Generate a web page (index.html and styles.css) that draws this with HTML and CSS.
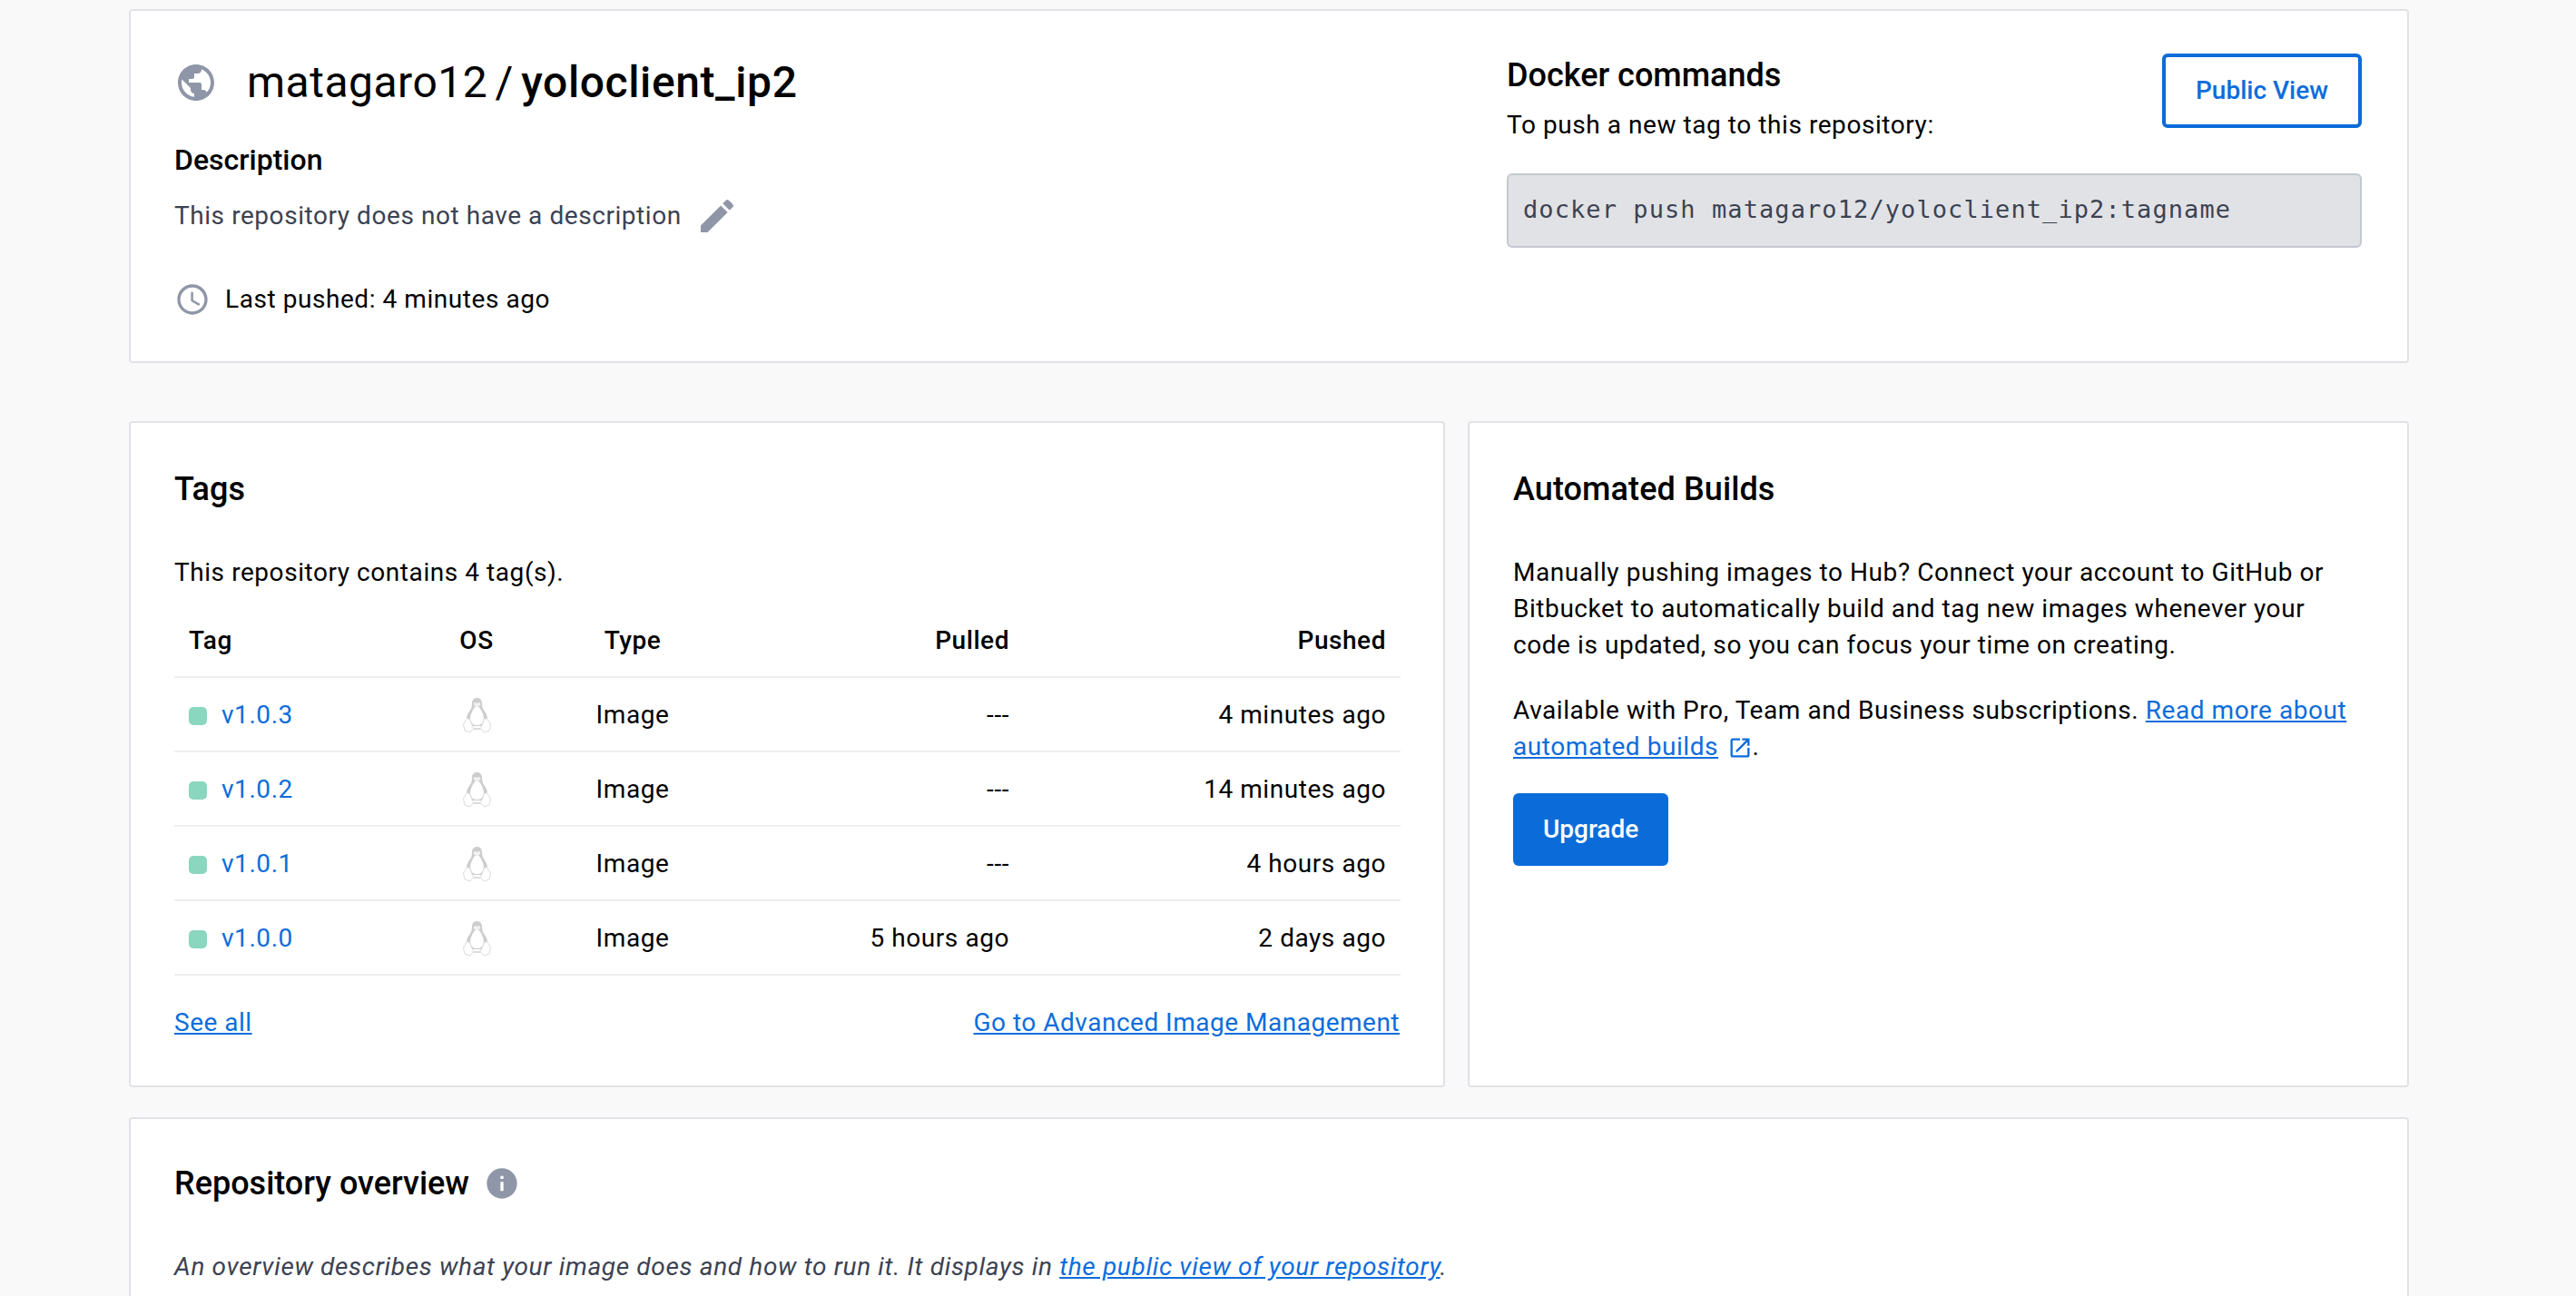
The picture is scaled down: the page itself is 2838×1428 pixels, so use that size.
FILE: index.html
```html
<!DOCTYPE html>
<html>
  <head>
    <title>matagaro12 / yoloclient_ip2</title>

    <link rel="stylesheet" href="styles.css">
  </head>
  <body>
    <svg class="icon_defs">
      <symbol id="linux_icon" viewBox="0 0 33 40">
        <path d="M16.5 1c-3.5 0-5.5 2.5-5.5 6 0 4-1 6-3 9-2 3-3.5 6-3 10l3 6h17l3-6c.5-4-1-7-3-10-2-3-3-5-3-9 0-3.5-2-6-5.5-6z" fill="#cdcdcd"/>
        <path d="M16.5 10c-2.5.5-4 3-5.500 6.500-1.500 3-2.500 6-1.500 9.500 1 3 3 5 7 5s6-2 7-5c1-3.500 0-6.500-1.500-9.500-1.500-3.500-3-6-5.500-6.500z" fill="#fff"/>
        <path d="M13 6.500c1-1 2.500-.5 3.500.5 1-1 2.500-1.500 3.500-.5.500 1.500 0 3-1 3.500l-2.500 1-2.500-1c-1-.5-1.500-2-1-3.500z" fill="#f1f1f1"/>
        <path d="M1.500 30l4-6.500 3 1 4 10-3.500 4.500-6-2z" fill="#fff" stroke="#dcdcdc"/>
        <path d="M31.500 30l-4-6.500-3 1-4 10 3.500 4.500 6-2z" fill="#fff" stroke="#dcdcdc"/>
        <path d="M12.500 35h8" stroke="#dcdcdc" stroke-width="2"/>
      </symbol>
    </svg>

    <div class="page">
      <div class="card repo_card">
        <div class="repo_info">
          <div class="repo_title">
            <svg class="globe_icon" viewBox="0 0 24 24"><path d="M12 2C6.48 2 2 6.48 2 12s4.48 10 10 10 10-4.48 10-10S17.52 2 12 2zm-1 17.93c-3.95-.49-7-3.85-7-7.93 0-.62.08-1.21.21-1.79L9 15v1c0 1.1.9 2 2 2v1.93zm6.9-2.54c-.26-.81-1-1.39-1.9-1.39h-1v-3c0-.55-.45-1-1-1H8v-2h2c.55 0 1-.45 1-1V7h2c1.1 0 2-.9 2-2v-.41c2.93 1.19 5 4.06 5 7.41 0 2.08-.8 3.97-2.1 5.39z"/></svg>
            <h1>matagaro12 <span class="slash">/</span> <strong>yoloclient_ip2</strong></h1>
          </div>
          <h2 class="description_title">Description</h2>
          <div class="description_row">
            <span>This repository does not have a description</span>
            <svg class="edit_icon" viewBox="0 0 24 24"><path d="M3 17.25V21h3.75L17.81 9.94l-3.75-3.75L3 17.25zM20.71 7.04c.39-.39.39-1.02 0-1.41l-2.34-2.34c-.39-.39-1.02-.39-1.41 0l-1.83 1.83 3.75 3.75 1.83-1.83z"/></svg>
          </div>
          <div class="pushed_row">
            <svg class="clock_icon" viewBox="0 0 24 24"><path d="M11.99 2C6.47 2 2 6.48 2 12s4.47 10 9.99 10C17.52 22 22 17.52 22 12S17.52 2 11.99 2zM12 20c-4.42 0-8-3.58-8-8s3.58-8 8-8 8 3.58 8 8-3.58 8-8 8zm.5-13H11v6l5.25 3.15.75-1.23-4.5-2.67z"/></svg>
            <span>Last pushed: 4 minutes ago</span>
          </div>
        </div>

        <div class="docker_commands">
          <div class="docker_top">
            <div>
              <h2 class="section_title">Docker commands</h2>
              <p class="docker_hint">To push a new tag to this repository:</p>
            </div>
            <a class="public_button">Public View</a>
          </div>
          <div class="docker_code">docker push matagaro12/yoloclient_ip2:tagname</div>
        </div>
      </div>

      <div class="middle_row">
        <div class="card tags_card">
          <h2 class="section_title">Tags</h2>
          <p class="tags_intro">This repository contains 4 tag(s).</p>
          <table class="tags_table">
            <colgroup>
              <col class="col_tag">
              <col class="col_os">
              <col class="col_type">
              <col class="col_pulled">
              <col class="col_pushed">
            </colgroup>
            <thead>
              <tr>
                <th>Tag</th>
                <th class="center">OS</th>
                <th class="center">Type</th>
                <th class="right">Pulled</th>
                <th class="right">Pushed</th>
              </tr>
            </thead>
            <tbody>
              <tr>
                <td><span class="tag_dot"></span><a class="tag_link">v1.0.3</a></td>
                <td class="center"><svg class="linux_icon"><use href="#linux_icon"/></svg></td>
                <td class="center">Image</td>
                <td class="right">---</td>
                <td class="right">4 minutes ago</td>
              </tr>
              <tr>
                <td><span class="tag_dot"></span><a class="tag_link">v1.0.2</a></td>
                <td class="center"><svg class="linux_icon"><use href="#linux_icon"/></svg></td>
                <td class="center">Image</td>
                <td class="right">---</td>
                <td class="right">14 minutes ago</td>
              </tr>
              <tr>
                <td><span class="tag_dot"></span><a class="tag_link">v1.0.1</a></td>
                <td class="center"><svg class="linux_icon"><use href="#linux_icon"/></svg></td>
                <td class="center">Image</td>
                <td class="right">---</td>
                <td class="right">4 hours ago</td>
              </tr>
              <tr>
                <td><span class="tag_dot"></span><a class="tag_link">v1.0.0</a></td>
                <td class="center"><svg class="linux_icon"><use href="#linux_icon"/></svg></td>
                <td class="center">Image</td>
                <td class="right">5 hours ago</td>
                <td class="right">2 days ago</td>
              </tr>
            </tbody>
          </table>
          <div class="tags_footer">
            <a class="text_link">See all</a>
            <a class="text_link">Go to Advanced Image Management</a>
          </div>
        </div>

        <div class="card builds_card">
          <h2 class="section_title">Automated Builds</h2>
          <p class="builds_text">Manually pushing images to Hub? Connect your account to GitHub or Bitbucket to automatically build and tag new images whenever your code is updated, so you can focus your time on creating.</p>
          <p class="builds_plans">Available with Pro, Team and Business subscriptions. <a class="text_link">Read more about</a> <a class="text_link">automated builds</a> <svg class="external_icon" viewBox="0 0 24 24"><path d="M19 19H5V5h7V3H5c-1.11 0-2 .9-2 2v14c0 1.1.89 2 2 2h14c1.1 0 2-.9 2-2v-7h-2v7zM14 3v2h3.59l-9.83 9.83 1.41 1.41L19 6.41V10h2V3h-7z"/></svg>.</p>
          <a class="upgrade_button">Upgrade</a>
        </div>
      </div>

      <div class="card">
        <div class="overview_title">
          <h2 class="section_title">Repository overview</h2>
          <svg class="info_icon" viewBox="0 0 24 24"><path d="M12 2C6.48 2 2 6.48 2 12s4.48 10 10 10 10-4.48 10-10S17.52 2 12 2zm1 15h-2v-6h2v6zm0-8h-2V7h2v2z"/></svg>
        </div>
        <p class="overview_text">An overview describes what your image does and how to run it. It displays in <a class="text_link">the public view of your repository</a>.</p>
      </div>
    </div>
  </body>
</html>
```

FILE: styles.css
```css
html
  {
  height: 100%;
  overflow: hidden;
  }

body
  {
  margin: 0;
  background: #f9f9fa;
  color: #000000;
  font-family: Roboto, "Liberation Sans", sans-serif;
  font-size: 28px;
  line-height: 40px;
  letter-spacing: 0.56px;
  }

h1, h2, p
  {
  margin: 0;
  }

.icon_defs
  {
  display: none;
  }

.page
  {
  width: 2512px;
  margin-left: 142px;
  padding-top: 10px;
  }

.card
  {
  background: #ffffff;
  border: 2px solid #e1e2e6;
  border-radius: 4px;
  padding: 48px;
  }

.section_title
  {
  font-size: 36px;
  font-weight: 500;
  line-height: 46px;
  letter-spacing: 0;
  }

.text_link
  {
  color: #0d6ddb;
  text-decoration: underline;
  }

/* Repository header */

.repo_card
  {
  display: flex;
  justify-content: space-between;
  padding-right: 50px;
  }

.repo_title
  {
  display: flex;
  align-items: center;
  height: 62px;
  }

.repo_title h1
  {
  font-size: 48px;
  font-weight: 400;
  line-height: 62px;
  letter-spacing: 0.5px;
  word-spacing: -4px;
  white-space: pre;
  }

.repo_title strong
  {
  font-weight: 500;
  letter-spacing: 0.6px;
  }

.globe_icon
  {
  width: 48px;
  height: 48px;
  margin-right: 32px;
  fill: #8f96a7;
  }

.description_title
  {
  margin-top: 34px;
  font-size: 32px;
  font-weight: 500;
  line-height: 40px;
  letter-spacing: 0;
  }

.description_row
  {
  display: flex;
  align-items: center;
  height: 40px;
  margin-top: 22px;
  color: #3c4252;
  }

.edit_icon
  {
  width: 48px;
  height: 48px;
  margin-left: 15px;
  fill: #8f96a7;
  }

.pushed_row
  {
  display: flex;
  align-items: center;
  margin-top: 52px;
  }

.clock_icon
  {
  width: 40px;
  height: 40px;
  margin-right: 16px;
  fill: #8f96a7;
  }

.docker_commands
  {
  width: 942px;
  }

.docker_top
  {
  display: flex;
  justify-content: space-between;
  align-items: flex-start;
  }

.docker_hint
  {
  margin-top: 12px;
  }

.public_button
  {
  margin-top: -1px;
  padding: 17px 33px;
  border: 4px solid #0b6cd9;
  border-radius: 6px;
  color: #0d6ddb;
  font-weight: 500;
  letter-spacing: 0;
  }

.docker_code
  {
  margin-top: 33px;
  padding: 18px 16px 20px;
  background: #e1e2e6;
  border: 2px solid #c4c8d1;
  border-radius: 6px;
  color: #3c4252;
  font-family: "DejaVu Sans Mono", monospace;
  font-size: 27px;
  letter-spacing: 1.08px;
  }

/* Tags and builds */

.middle_row
  {
  display: grid;
  grid-template-columns: 1450px 1037px;
  gap: 25px;
  margin: 64px 0 33px;
  }

.tags_card, .builds_card
  {
  padding-top: 50px;
  padding-bottom: 49px;
  }

.builds_card .section_title
  {
  letter-spacing: 0.1px;
  }

.tags_intro
  {
  margin-top: 49px;
  }

.tags_table
  {
  width: 1351px;
  margin-top: 14px;
  border-collapse: collapse;
  table-layout: fixed;
  }

.col_tag { width: 290px; }
.col_os { width: 86px; }
.col_type { width: 258px; }
.col_pulled { width: 302px; }
.col_pushed { width: 415px; }

.tags_table th, .tags_table td
  {
  height: 78px;
  padding: 2px 16px 0;
  border-bottom: 2px solid #eeeeee;
  text-align: left;
  white-space: nowrap;
  }

.tags_table th
  {
  font-weight: 500;
  }

.tags_table th.center, .tags_table td.center
  {
  padding: 2px 0 0;
  text-align: center;
  }

.tags_table th.right, .tags_table td.right
  {
  text-align: right;
  }

.tag_dot
  {
  display: inline-block;
  width: 20px;
  height: 20px;
  margin-right: 16px;
  background: #8ad6bf;
  border-radius: 5px;
  vertical-align: -2px;
  }

.tag_link
  {
  color: #0d6ddb;
  }

.linux_icon
  {
  display: block;
  width: 33px;
  height: 40px;
  margin: 0 auto;
  }

.tags_footer
  {
  display: flex;
  justify-content: space-between;
  margin-top: 32px;
  letter-spacing: 0.5px;
  }

.builds_text
  {
  margin-top: 49px;
  }

.builds_plans
  {
  margin-top: 32px;
  }

.external_icon
  {
  width: 28px;
  height: 28px;
  margin-left: 2px;
  fill: #0d6ddb;
  vertical-align: -6px;
  }

.upgrade_button
  {
  display: inline-block;
  margin-top: 31px;
  padding: 20px 33px;
  background: #0b6cd9;
  border-radius: 6px;
  color: #ffffff;
  font-weight: 500;
  letter-spacing: 0;
  }

/* Repository overview */

.overview_title
  {
  display: flex;
  align-items: center;
  gap: 16px;
  }

.info_icon
  {
  width: 40px;
  height: 40px;
  fill: #8f96a7;
  }

.overview_text
  {
  margin-top: 49px;
  color: #3c4252;
  font-style: italic;
  letter-spacing: 0.66px;
  }
```
